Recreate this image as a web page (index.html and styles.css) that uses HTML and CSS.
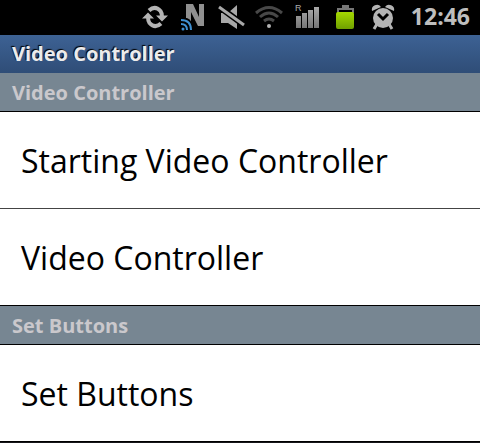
FILE: index.html
```html
<!DOCTYPE html>
<html lang="en">

<head>
    <meta charset="UTF-8">
    <meta name="viewport" content="width=device-width, initial-scale=1.0">
    <title>Video Controller</title>
    <link rel="stylesheet" href="styles.css">
</head>

<body>
    <div class="status-bar">
        <!-- sync -->
        <svg class="icon" viewBox="0 0 28 30" fill="none" stroke="#b4b4b4" stroke-width="4">
            <path d="M8 9.500 Q14 4 19.500 10 Q21 12 21 16"/>
            <path d="M20 22.500 Q14 28 8.500 22 Q7 20 7 16"/>
            <path d="M15 14.500h12l-6 6z M1 17.500h12l-6-6z" fill="#b4b4b4" stroke="none"/>
        </svg>
        <!-- nfc -->
        <svg class="icon" viewBox="0 0 28 30">
            <path d="M7 3h7l6 13V3h5v22h-6L12 11v14H7z" fill="#909090"/>
            <path d="M1 17h7q6 2 6 12H1z" fill="#000"/>
            <g fill="none" stroke="#3f8fd0" stroke-width="2">
                <path d="M2 19q10 0 10 10M2 23q6 0 6 6"/>
            </g>
            <circle cx="4" cy="28" r="1.500" fill="#3f8fd0"/>
        </svg>
        <!-- muted -->
        <svg class="icon" viewBox="0 0 28 30">
            <path d="M4 12h7l9-8v24l-9-6H4z" fill="#a8a8a8"/>
            <path d="M1 5l26 19" stroke="#000" stroke-width="6"/>
            <path d="M2 6l25 18" stroke="#a8a8a8" stroke-width="3"/>
        </svg>
        <!-- wifi -->
        <svg class="icon" viewBox="0 0 28 30" fill="none" stroke="#484848" stroke-width="3">
            <path d="M1 12q13-11 26 0M5 16q9-8 18 0M9 20q5-4 10 0"/>
            <circle cx="14" cy="25" r="2" fill="#b4b4b4" stroke="none"/>
        </svg>
        <!-- signal -->
        <svg class="icon" viewBox="0 0 28 30">
            <defs>
                <linearGradient id="bars" x2="0" y2="1">
                    <stop offset="0" stop-color="#aaa"/>
                    <stop offset="1" stop-color="#777"/>
                </linearGradient>
            </defs>
            <path d="M3 15h5v12H3zM9 12h5v15H9zM15 9h5v18h-5zM21 6h5v21h-5z" fill="url(#bars)"/>
            <text class="roaming" x="2" y="10">R</text>
        </svg>
        <!-- battery -->
        <svg class="icon" viewBox="0 0 28 30">
            <defs>
                <linearGradient id="charge" x2="0" y2="1">
                    <stop offset="0" stop-color="#a5d900"/>
                    <stop offset="1" stop-color="#70a000"/>
                </linearGradient>
            </defs>
            <path d="M6 12V7h5V4h7v3h5v5h-2V9H8v3z" fill="#777"/>
            <rect x="5" y="11" width="18" height="17" rx="2" fill="url(#charge)"/>
        </svg>
        <!-- alarm -->
        <svg class="icon" viewBox="0 0 28 30">
            <path d="M3 10a5 5 0 0 1 9-4zM25 10a5 5 0 0 0-9-4z" fill="#b4b4b4"/>
            <path d="M8 23l-3 5M20 23l3 5" stroke="#b4b4b4" stroke-width="3"/>
            <circle cx="14" cy="17" r="10" fill="#b4b4b4"/>
            <path d="M9 13l5 5 5-5" fill="none" stroke="#000" stroke-width="3"/>
        </svg>
        <time class="clock">12:46</time>
    </div>

    <h1 class="title-bar">Video Controller</h1>

    <h2 class="category">Video Controller</h2>
    <ul class="list">
        <li><a href="#starting">Starting Video Controller</a></li>
        <li><a href="#video">Video Controller</a></li>
    </ul>

    <h2 class="category">Set Buttons</h2>
    <ul class="list">
        <li><a href="#buttons">Set Buttons</a></li>
    </ul>
</body>

</html>
```
FILE: styles.css
```css
body {
    margin: 0;
    background-color: #16161a;
    font-family: "Open Sans", "Noto Sans", sans-serif;
}

.status-bar {
    display: flex;
    justify-content: flex-end;
    align-items: center;
    gap: 10px;
    height: 35px;
    padding-right: 10px;
    box-sizing: border-box;
    background-color: #000;
}

.icon {
    width: 28px;
    height: 30px;
    margin-bottom: 4px;
}

.roaming {
    font: 9px "Liberation Sans", sans-serif;
    fill: #aaa;
}

.clock {
    margin-left: 4px;
    margin-bottom: 3px;
    color: #bebebe;
    font-size: 23px;
    font-weight: 700;
    line-height: 32px;
}

.title-bar,
.category {
    margin: 0;
    padding: 0 12px;
    font-size: 20px;
    font-weight: 700;
    line-height: 38px;
}

.title-bar {
    background: linear-gradient(#3d6294, #2f4d77);
    color: #ececec;
    text-shadow: -1px -1px 1px #000;
}

.category {
    padding-top: 1px;
    border-bottom: 1px solid #000;
    background-color: #778692;
    color: #cac8cc;
    line-height: 37px;
}

.list {
    margin: 0;
    padding: 0;
    list-style: none;
    border-bottom: 1px solid #000;
    background-color: #fff;
}

.list li + li {
    border-top: 1px solid #444;
}

.list a {
    display: block;
    padding: 25px 21px 23px;
    color: #000;
    font-size: 32px;
    line-height: 48px;
    text-decoration: none;
}
```
